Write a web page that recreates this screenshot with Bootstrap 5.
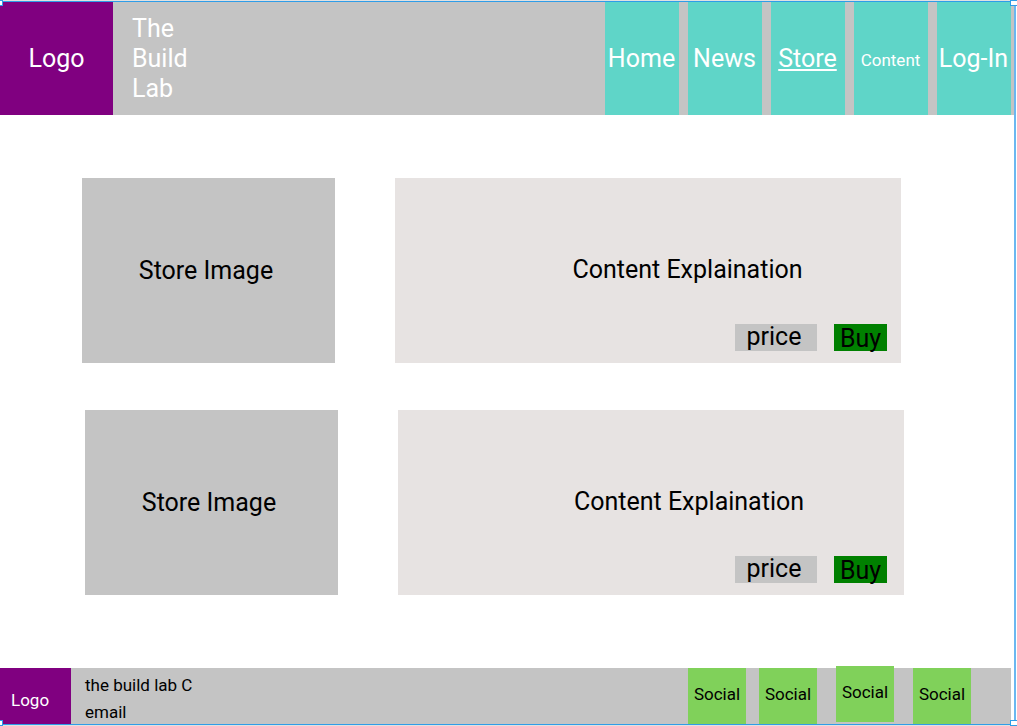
<!DOCTYPE html>
<html lang="en">
<head>
<meta charset="utf-8">
<meta name="viewport" content="width=device-width, initial-scale=1">
<title>The Build Lab - Store</title>
<link href="https://cdn.jsdelivr.net/npm/bootstrap@5.3.0/dist/css/bootstrap.min.css" rel="stylesheet">
<style>
  body { font-family: Roboto, sans-serif; font-size: 25px; line-height: 30px; color: #000; background: #fff; }
  .bg-silver { background: #c4c4c4; }
  .bg-brand { background: #800080; color: #fff; }
  .small-text { font-size: 17px; line-height: 27px; }

  .site-header { margin-right: 3px; padding-right: 3px; height: 115px; border-top: 2px solid #e1e1e1; }
  .header-logo { width: 113px; }
  .site-title { width: 60px; margin-left: 19px; }
  .site-nav { gap: 9px; }
  .site-nav .nav-tile { width: 74px; padding-right: 1px; background: #5fd5c8; color: #fff; white-space: nowrap; }

  .store { gap: 47px; padding: 63px 116px 60px 82px; }
  .product { display: grid; grid-template-columns: 1fr 2fr; gap: 60px; min-height: 185px; }
  .product-shifted { margin: 0 -3px 0 3px; }
  .product-image { padding-right: 5px; }
  .product-info { background: #e7e3e2; padding: 77px 14px 12px; }
  .product-shifted .product-info { padding-right: 17px; }
  .product-text { padding-left: 79px; }
  .product-actions { gap: 17px; }
  .price-tag { width: 82px; height: 27px; line-height: 25px; padding-right: 4px; }
  .buy-button { width: 53px; height: 27px; line-height: 30px; background: #008000; color: #000; }

  .site-footer { margin-right: 6px; padding-right: 40px; height: 58px; border-bottom: 2px solid #e1e1e1; }
  .footer-logo { width: 71px; padding: 19px 0 0 11px; }
  .footer-info { padding: 4px 0 0 14px; }
  .social-list { gap: 19px; }
  .social-tile { width: 58px; height: 56px; padding-bottom: 3px; background: #80d15a; color: #000; }
  .social-tile:first-child { margin-right: -6px; }
  .social-raised { margin-top: -2px; }

  /* selection outline drawn over the page */
  .frame { position: fixed; inset: 1px 1px 1px 0; border: solid #2f9de8; border-width: 1px 2px 1px 0; border-right-color: #6bb7f0; pointer-events: none; }
  .frame-handle { position: absolute; width: 8px; height: 6px; background: #fff; border: 1px solid #2f9de8; }
  .handle-tl { left: -5px; top: -2px; }
  .handle-tr { right: -4px; top: -2px; }
  .handle-bl { left: -5px; bottom: -2px; }
  .handle-br { right: -4px; bottom: -2px; }
</style>
</head>
<body class="d-flex flex-column min-vh-100 overflow-x-hidden">
<header class="site-header bg-silver d-flex">
  <a href="#" class="header-logo bg-brand d-flex align-items-center justify-content-center text-decoration-none">Logo</a>
  <div class="site-title text-white align-self-center">The Build Lab</div>
  <nav class="site-nav d-flex ms-auto" aria-label="Main">
    <a href="#" class="nav-tile d-flex align-items-center justify-content-center text-decoration-none">Home</a>
    <a href="#" class="nav-tile d-flex align-items-center justify-content-center text-decoration-none">News</a>
    <a href="#" class="nav-tile d-flex align-items-center justify-content-center" aria-current="page">Store</a>
    <a href="#" class="nav-tile small-text d-flex align-items-center justify-content-center text-decoration-none pt-1">Content</a>
    <a href="#" class="nav-tile d-flex align-items-center justify-content-center text-decoration-none">Log-In</a>
  </nav>
</header>

<main class="store d-flex flex-column flex-grow-1">
  <article class="product">
    <div class="product-image bg-silver d-flex align-items-center justify-content-center">Store Image</div>
    <div class="product-info d-flex flex-column">
      <div class="product-text text-center">Content Explaination</div>
      <div class="product-actions d-flex justify-content-end mt-auto">
        <div class="price-tag bg-silver text-center">price</div>
        <button type="button" class="buy-button border-0 p-0">Buy</button>
      </div>
    </div>
  </article>
  <article class="product product-shifted">
    <div class="product-image bg-silver d-flex align-items-center justify-content-center">Store Image</div>
    <div class="product-info d-flex flex-column">
      <div class="product-text text-center">Content Explaination</div>
      <div class="product-actions d-flex justify-content-end mt-auto">
        <div class="price-tag bg-silver text-center">price</div>
        <button type="button" class="buy-button border-0 p-0">Buy</button>
      </div>
    </div>
  </article>
</main>

<footer class="site-footer bg-silver small-text d-flex">
  <a href="#" class="footer-logo bg-brand text-decoration-none">Logo</a>
  <div class="footer-info">
    <div>the build lab C</div>
    <div>email</div>
  </div>
  <nav class="social-list d-flex ms-auto" aria-label="Social">
    <a href="#" class="social-tile d-flex align-items-center justify-content-center text-decoration-none">Social</a>
    <a href="#" class="social-tile d-flex align-items-center justify-content-center text-decoration-none">Social</a>
    <a href="#" class="social-tile social-raised d-flex align-items-center justify-content-center text-decoration-none">Social</a>
    <a href="#" class="social-tile d-flex align-items-center justify-content-center text-decoration-none">Social</a>
  </nav>
</footer>

<div class="frame" aria-hidden="true">
  <span class="frame-handle handle-tl"></span>
  <span class="frame-handle handle-tr"></span>
  <span class="frame-handle handle-bl"></span>
  <span class="frame-handle handle-br"></span>
</div>
<script src="https://cdn.jsdelivr.net/npm/bootstrap@5.3.0/dist/js/bootstrap.bundle.min.js"></script>
</body>
</html>
